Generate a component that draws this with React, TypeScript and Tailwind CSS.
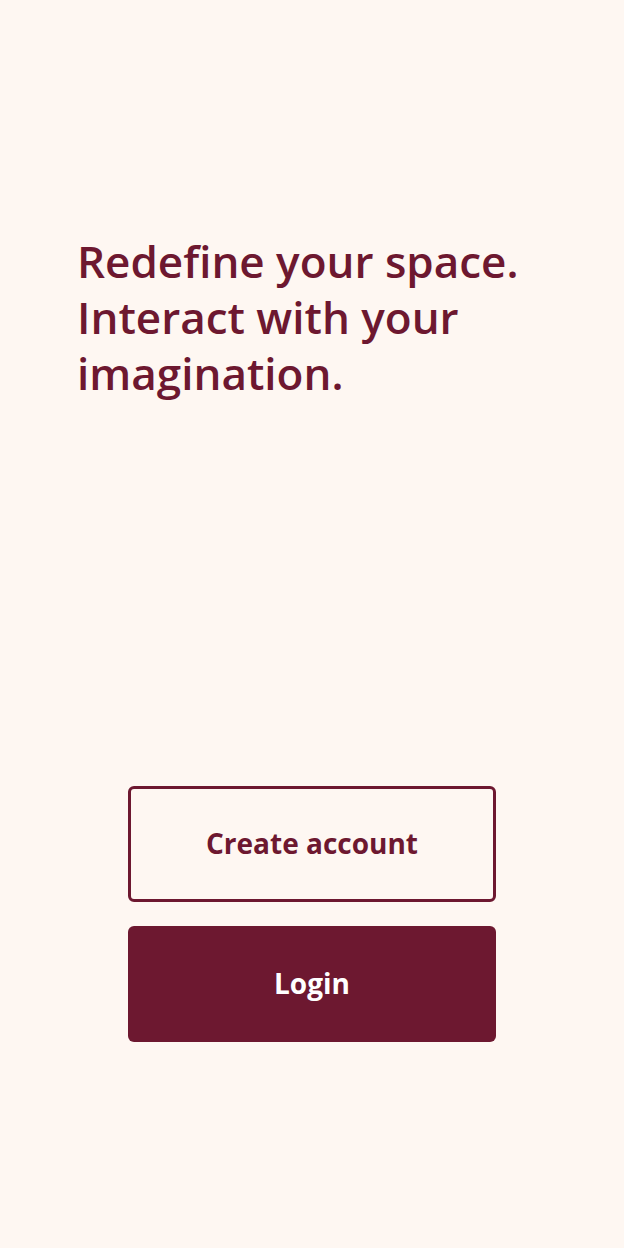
export default function App() {
  return (
    <main
      className="flex min-h-screen flex-col bg-[#fef7f2] px-[77px] pt-[233px]"
      style={{ fontFamily: '"Open Sans", "Noto Sans", sans-serif' }}
    >
      <h1 className="text-[44px] font-semibold leading-[56px] text-[#6d1830]">
        Redefine your space.
        <br />
        Interact with your
        <br />
        imagination.
      </h1>

      <div className="mx-auto mt-[385px] flex w-[368px] flex-col gap-[24px]">
        <button className="flex h-[116px] items-center justify-center rounded-[6px] border-[3px] border-[#6d1830] bg-transparent pb-[2px] text-[28px] font-bold text-[#6d1830]">
          Create account
        </button>
        <button className="flex h-[116px] items-center justify-center rounded-[6px] bg-[#6d1830] pb-[2px] text-[28px] font-bold text-white">
          Login
        </button>
      </div>
    </main>
  );
}
